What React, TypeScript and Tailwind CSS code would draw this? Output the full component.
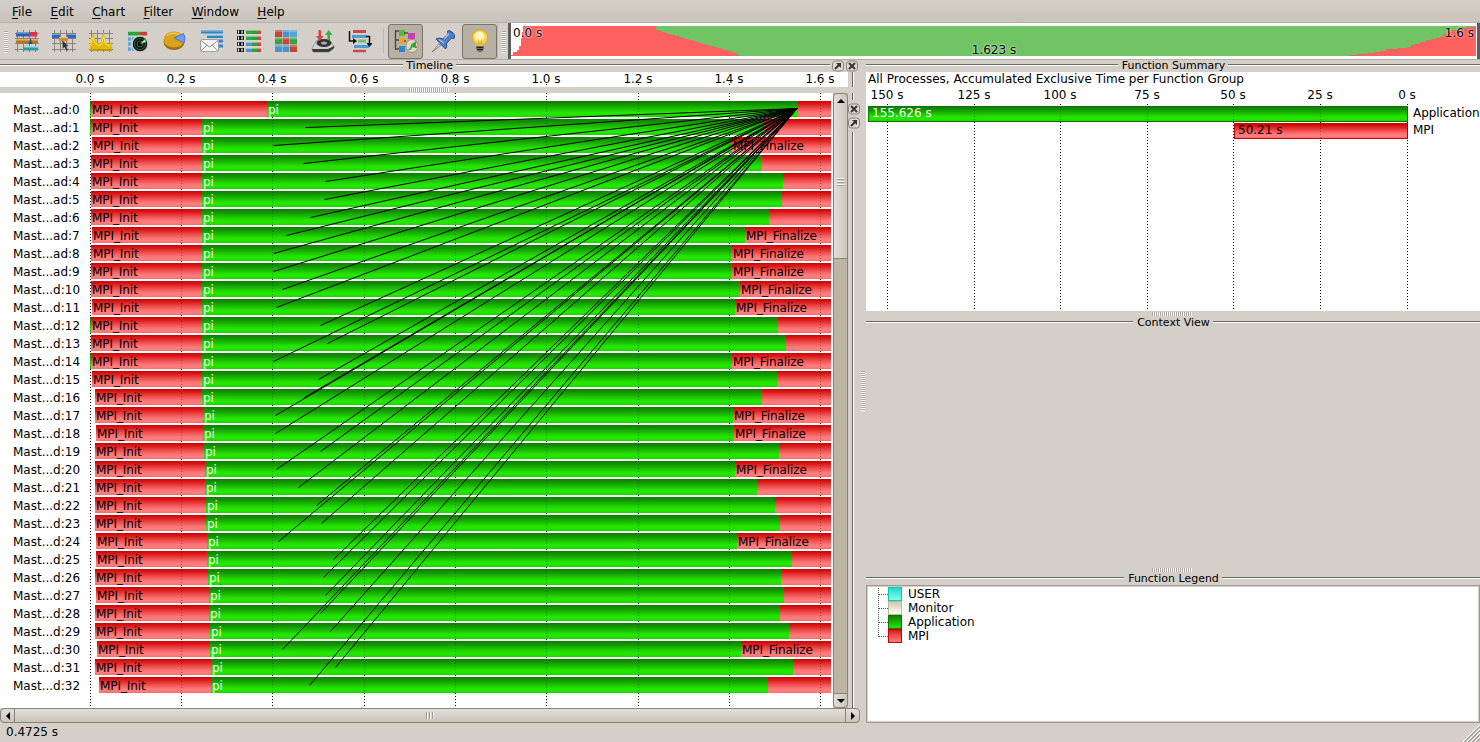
import React from 'react';

type Row = { init: number; pi: number; fin: number; named?: boolean; msg?: number; lead?: boolean };

// Positions are in chart pixels, measured from the window's left edge.
const ROWS: Row[] = [
  { init: 91, pi: 267, fin: 798, lead: true },
  { init: 91, pi: 202, fin: 764, msg: 305, lead: true },
  { init: 92, pi: 202, fin: 732, named: true, msg: 273 },
  { init: 91, pi: 202, fin: 762, msg: 303 },
  { init: 91, pi: 202, fin: 783, msg: 325 },
  { init: 91, pi: 202, fin: 782, msg: 324 },
  { init: 91, pi: 202, fin: 769, msg: 310 },
  { init: 92, pi: 202, fin: 745, named: true, msg: 286 },
  { init: 92, pi: 202, fin: 732, named: true, msg: 273, lead: true },
  { init: 91, pi: 202, fin: 732, named: true, msg: 273 },
  { init: 91, pi: 202, fin: 740, named: true, msg: 282 },
  { init: 92, pi: 202, fin: 735, named: true, msg: 276 },
  { init: 91, pi: 202, fin: 778, msg: 320, lead: true },
  { init: 91, pi: 202, fin: 786, msg: 327 },
  { init: 91, pi: 202, fin: 732, named: true, msg: 273, lead: true },
  { init: 92, pi: 202, fin: 777, msg: 318 },
  { init: 95, pi: 202, fin: 762, msg: 304 },
  { init: 95, pi: 203, fin: 733, named: true, msg: 275 },
  { init: 96, pi: 203, fin: 734, named: true, msg: 275 },
  { init: 95, pi: 204, fin: 779, msg: 320 },
  { init: 95, pi: 205, fin: 735, named: true, msg: 276 },
  { init: 95, pi: 205, fin: 757, msg: 298 },
  { init: 95, pi: 206, fin: 775, msg: 316 },
  { init: 95, pi: 206, fin: 780, msg: 321 },
  { init: 96, pi: 207, fin: 737, named: true, msg: 278 },
  { init: 96, pi: 207, fin: 792, msg: 333 },
  { init: 95, pi: 208, fin: 781, msg: 323 },
  { init: 96, pi: 209, fin: 784, msg: 325 },
  { init: 95, pi: 209, fin: 780, msg: 320 },
  { init: 95, pi: 210, fin: 789, msg: 330 },
  { init: 97, pi: 210, fin: 741, named: true, msg: 282 },
  { init: 95, pi: 211, fin: 793, msg: 335 },
  { init: 99, pi: 211, fin: 768, msg: 309 },
];

const TICKS = [
  { x: 90, label: '0.0 s' },
  { x: 181, label: '0.2 s' },
  { x: 272, label: '0.4 s' },
  { x: 364, label: '0.6 s' },
  { x: 455, label: '0.8 s' },
  { x: 546, label: '1.0 s' },
  { x: 638, label: '1.2 s' },
  { x: 729, label: '1.4 s' },
  { x: 820, label: '1.6 s' },
];

const SUMMARY_TICKS = [
  { x: 21, label: '150 s' },
  { x: 108, label: '125 s' },
  { x: 194, label: '100 s' },
  { x: 281, label: '75 s' },
  { x: 367, label: '50 s' },
  { x: 454, label: '25 s' },
  { x: 541, label: '0 s' },
];

const GREEN = 'bg-[linear-gradient(180deg,#0f7d00_0%,#129400_20%,#1ec400_50%,#23e600_70%,#23e600_85%,#1fd000_100%)]';
const RED = 'bg-[linear-gradient(180deg,#cf0000_0%,#dc1c1c_20%,#f25252_50%,#fe7b7b_75%,#ff7d7d_88%,#f96a6a_100%)]';
const STRIPES_H = 'bg-[repeating-linear-gradient(90deg,#a9a59d_0px,#a9a59d_1px,#ffffff_1px,#ffffff_2px)]';
const STRIPES_V = 'bg-[repeating-linear-gradient(180deg,#a9a59d_0px,#a9a59d_1px,#ffffff_1px,#ffffff_2px)]';

function Menu() {
  return (
    <nav className="flex h-[23px] shrink-0 items-center border-b border-[#b7b2aa] bg-gradient-to-b from-[#d4cfc8] to-[#c9c3bb] pl-3">
      {['File', 'Edit', 'Chart', 'Filter', 'Window', 'Help'].map((m) => (
        <span key={m} className="mr-[18.4px] pt-[2px] leading-[22px]">
          <span className="underline decoration-1 underline-offset-2">{m[0]}</span>
          {m.slice(1)}
        </span>
      ))}
    </nav>
  );
}

const Svg = ({ children }: { children: React.ReactNode }) => (
  <svg width="24" height="24" viewBox="0 0 24 24" className="block">
    {children}
  </svg>
);

const GridLines = () => (
  <path d="M2.5 1V23M8.5 1V23M14.5 1V23M20.5 1V23M0 4.5H24M0 9.5H24M0 14.5H24M0 20.5H24" stroke="#55524d" strokeWidth="1" opacity=".6" />
);

function IconTimeline() {
  return (
    <Svg>
      <GridLines />
      <rect x="1" y="3" width="14" height="4.500" fill="#2f5fae" />
      <rect x="1" y="3" width="14" height="1.500" fill="#6f9ad8" />
      <rect x="14" y="3" width="8" height="4.500" fill="#e0304a" />
      <rect x="1" y="10" width="22" height="4.500" fill="#b8741c" />
      <rect x="1" y="10" width="22" height="1.500" fill="#e6b066" />
      <path d="M15.500 9l2 6h-4z" fill="#2450a0" />
      <rect x="9" y="17" width="14" height="4.500" fill="#2f9ba5" />
      <rect x="9" y="17" width="14" height="1.500" fill="#8be0e4" />
    </Svg>
  );
}

function IconProcess() {
  return (
    <Svg>
      <GridLines />
      <rect x="0" y="5" width="8" height="4" fill="#2f66b8" />
      <rect x="15" y="5" width="9" height="4" fill="#2f66b8" />
      <path d="M0 5.500H8M15 5.500H24" stroke="#77a4e0" />
      <rect x="7" y="8" width="9" height="4" fill="#d8892c" />
      <path d="M7 8.500H16" stroke="#f0bd7c" />
      <path d="M10 11l6.500 6-2.300.400 2 3.600-1.700 1-2-3.800-1.700 1.600z" fill="#333" stroke="#999" strokeWidth=".5" />
    </Svg>
  );
}

function IconCounter() {
  return (
    <Svg>
      <GridLines />
      <path d="M1 21V15l2-9 1.500-2 1.500 6 3 4 3-1 1-7 1.500-3L16 9l1 5 3 1 1.500-2 1.500 4v4z" fill="#e0b90c" />
      <path d="M1.500 16l2-8 2 5 4 4 3-2 2-8 2 8 5 2" fill="none" stroke="#f7e46c" strokeWidth="1" />
      <path d="M1 21h22" stroke="#c29a00" strokeWidth="2" />
    </Svg>
  );
}

function IconRadar() {
  return (
    <Svg>
      <rect x="2" y="2" width="12" height="4.500" fill="#2aa63a" />
      <rect x="14" y="2" width="7" height="4.500" fill="#cf3a34" />
      <path d="M2 2.500H21" stroke="#8fd59a" />
      <path d="M2 10H10M2 15H8M2 20H10" stroke="#5ba3dc" strokeWidth="3.500" strokeDasharray="3 1" />
      <circle cx="14" cy="15" r="8" fill="#0a0f0c" stroke="#c9ccc9" strokeWidth="1.500" />
      <circle cx="14" cy="15" r="5.500" fill="none" stroke="#396c46" />
      <circle cx="14" cy="15" r="3" fill="none" stroke="#396c46" />
      <path d="M14 15l5-5 1 3z" fill="#a7f0a2" />
    </Svg>
  );
}

function IconPie() {
  return (
    <Svg>
      <ellipse cx="11" cy="13" rx="10.500" ry="8" fill="#9a6c0b" />
      <ellipse cx="11" cy="10.500" rx="10.500" ry="8" fill="#daa31e" />
      <path d="M4 6.500q6-4 12-1" stroke="#f6d878" fill="none" />
      <path d="M11 9l9.500-4.500q3 5 .500 9.500z" fill="#6f9df0" stroke="#3f69c0" strokeWidth=".8" />
    </Svg>
  );
}

function IconMail() {
  return (
    <Svg>
      <path d="M1 3H23M7 7.500H23M12 12H23M19 17H23" stroke="#2e86cc" strokeWidth="3.200" />
      <path d="M1 2H23M7 6.500H23" stroke="#81bde9" strokeWidth="1" />
      <rect x=".5" y="10.500" width="18" height="12" rx="1" fill="#f4f4f2" stroke="#a3a19c" />
      <path d="M1 11.500l8.500 6.500 8.500-6.500M1 22l6-6M18 22l-6-6" fill="none" stroke="#94928d" />
    </Svg>
  );
}

function IconCompare() {
  const ys = [1, 7, 13, 19];
  return (
    <Svg>
      {ys.map((y) => (
        <g key={y}>
          <rect x="0" y={y} width="7" height="4" fill="#111" />
          <path d={`M1.500 ${y + 0.5}v3M5 ${y + 0.5}v3`} stroke="#fff" strokeWidth="1.200" />
          <rect x="9" y={y} width="6" height="4" fill={y > 10 ? '#4c94cf' : '#2ea63f'} />
          <rect x="15" y={y} width="6" height="4" fill="#2f9e3c" />
          <rect x="20" y={y} width="4" height="4" fill="#cb4840" />
          <path d={`M9 ${y + 0.5}H24`} stroke="#fff" opacity=".4" />
        </g>
      ))}
    </Svg>
  );
}

function IconMatrix() {
  const c = ['#c4443a', '#4a94cc', '#5aa2d4', '#36a33e', '#c4443a', '#36a33e', '#4a94cc', '#4a94cc', '#c4443a'];
  return (
    <Svg>
      <rect x="1" y="1" width="22" height="22" fill="#e3e1dd" />
      {c.map((f, i) => (
        <g key={i}>
          <rect x={1 + (i % 3) * 7.5} y={1 + Math.floor(i / 3) * 7.5} width="7" height="7" fill={f} />
          <rect x={1 + (i % 3) * 7.5} y={1 + Math.floor(i / 3) * 7.5} width="7" height="2" fill="#fff" opacity=".25" />
        </g>
      ))}
    </Svg>
  );
}

function IconIO() {
  return (
    <Svg>
      <path d="M1 19l5-8h12l5 6v2l-5 4H2z" fill="#cfcfcf" stroke="#777" strokeWidth=".6" />
      <path d="M1 20h16l6-3v2l-5 4H2z" fill="#3b3b3b" />
      <ellipse cx="13" cy="14" rx="7.500" ry="4" fill="#333" />
      <ellipse cx="13" cy="14" rx="3" ry="1.500" fill="#aaa" />
      <path d="M7.500 1h2.500v6h2.500l-3.700 5-3.800-5h2.500z" fill="#d34338" />
      <path d="M16.500 11h2.500V6h2.500l-3.700-5L14 6h2.500z" fill="#3fae40" />
    </Svg>
  );
}

function IconTree() {
  return (
    <Svg>
      <path d="M5 2.500H18" stroke="#c94a44" strokeWidth="3" />
      <path d="M4 7.500H19" stroke="#4c9ad6" strokeWidth="3" />
      <path d="M10 12H18" stroke="#6fbf72" strokeWidth="3" />
      <path d="M6 17.500H21" stroke="#4c9ad6" strokeWidth="3" />
      <path d="M5 22H18" stroke="#c94a44" strokeWidth="2.500" />
      <path d="M1.500 2v10H6M18 7.500h3.500V15" fill="none" stroke="#111" strokeWidth="1.500" />
      <path d="M5 9l4 3-4 3zM18.500 14h6l-3 4z" fill="#111" />
    </Svg>
  );
}

function IconPalette() {
  return (
    <Svg>
      <path d="M6 2H1.500V20H6M1.500 11H6" fill="none" stroke="#444" strokeWidth="1.300" />
      <rect x="5" y="1" width="6" height="6" fill="#57b83c" />
      <rect x="5" y="9" width="6" height="5.500" fill="#f2a320" />
      <rect x="5" y="17" width="6" height="6" fill="#2f84d4" />
      <path d="M10 4h4M10 12h2" stroke="#222" />
      <ellipse cx="18" cy="17" rx="6" ry="6.500" fill="#e0d9c4" stroke="#8b8573" strokeWidth=".8" />
      <path d="M13.500 21q3-1 4-6l5-3-1 7-3-1-2 3z" fill="#35a43c" />
      <rect x="14" y="4" width="7" height="6" fill="#d53bb0" />
      <circle cx="22" cy="18" r="1" fill="#d44" />
    </Svg>
  );
}

function IconPin() {
  return (
    <Svg>
      <path d="M1 23l7-8 1.500 1.500z" fill="#e8e8e8" stroke="#666" strokeWidth=".8" />
      <path d="M5 10q4-2 6.500 0L17 5 16.500 2q2-1.500 5.500 2t1 5.500l-2.500-.500-5 5.500q1 3-1 5.500z" fill="#4f7fc4" stroke="#234a85" strokeWidth="1" />
      <path d="M8 10.500l5 3.500M13 10l5-5.500" stroke="#a9c7ee" strokeWidth="1.300" />
    </Svg>
  );
}

function IconBulb() {
  return (
    <Svg>
      <circle cx="12" cy="8.500" r="7.800" fill="#f8d04a" stroke="#d89c1f" strokeWidth=".8" />
      <path d="M8 14h8l-1 4H9z" fill="#edba3a" />
      <circle cx="11.500" cy="7.500" r="5" fill="#fff6c4" />
      <path d="M10 10l1 5M14 10l-1 5" stroke="#c98f1f" fill="none" strokeWidth=".7" />
      <path d="M8.500 17h7v4l-2 2h-3l-2-2z" fill="#6d6d6d" />
      <path d="M8.500 18.500h7M9 20.500h6" stroke="#222" />
    </Svg>
  );
}

function Overview() {
  return (
    <div className="relative h-9 min-w-0 flex-1 border-x-[3px] border-[#5c5c5c] bg-white">
      <svg width="965" height="36" className="block" shapeRendering="crispEdges">
        <rect x="12" y="3" width="953" height="30" fill="#70c464" />
        <path
          d="M0 33V32H2V29H6V27H8V23H10V15H11V9H12V3H145V7H148V8H151V9H154V10H157V11H161V12H164V13H168V14H171V15H174V16H178V17H182V18H185V19H188V20H191V21H195V22H199V23H203V24H206V25H210V26H213V27H217V28H220V29H222V30H225V31H227V32H229V33Z"
          fill="#ff6060"
        />
        <path
          d="M838 33V32H847V31H855V30H864V29H869V28H875V26H887V25H896V24H900V22H903V21H909V19H915V17H920V16H925V15H929V14H933V11H937V9H941V7H946V6H952V5H956V4H965V33Z"
          fill="#ff6060"
        />
      </svg>
      <span className="absolute left-[2px] top-[3px] leading-[14px] [text-shadow:0_0_2px_#fff,0_0_2px_#fff]">0.0 s</span>
      <span className="absolute right-[3px] top-[3px] leading-[14px] [text-shadow:0_0_2px_#ffffffb0,0_0_2px_#ffffffb0]">1.6 s</span>
      <span className="absolute inset-x-0 top-[20px] text-center leading-[14px] [text-shadow:0_0_2px_#ffffffb0,0_0_2px_#ffffffb0]">1.623 s</span>
    </div>
  );
}

function Toolbar() {
  const plain = [IconTimeline, IconProcess, IconCounter, IconRadar, IconPie, IconMail, IconCompare, IconMatrix, IconIO, IconTree];
  return (
    <div className="flex h-[37px] shrink-0 border-b border-[#b1ada6]">
      <div className={`ml-1 mt-2 h-[22px] w-1 ${STRIPES_V}`} />
      <div className="flex h-9 items-center">
        {plain.map((I, i) => (
          <button key={i} className="flex w-[37px] justify-center">
            <I />
          </button>
        ))}
        <div className="ml-[5px] mr-[4px] h-6 w-px bg-[#bcb7af]" />
        <button className="flex h-[35px] w-[35px] items-center justify-center rounded-[3px] border border-[#79736a] bg-[#b7b0a4]">
          <IconPalette />
        </button>
        <button className="flex w-[39px] justify-center">
          <IconPin />
        </button>
        <button className="flex h-[35px] w-[35px] items-center justify-center rounded-[3px] border border-[#79736a] bg-[#b7b0a4]">
          <IconBulb />
        </button>
      </div>
      <div className="mr-[2px] h-9 w-px bg-[#bcb7af]" />
      <div className={`ml-[2px] mr-[2px] mt-2 h-[22px] w-1 ${STRIPES_V}`} />
      <Overview />
    </div>
  );
}

const Rule = () => <div className="-mt-[2px] h-[2px] flex-1 border-b border-white bg-[#6b6863]" />;

function DockButton({ kind }: { kind: 'float' | 'close' }) {
  return (
    <svg width="12" height="12" viewBox="0 0 12 12" className="block shrink-0">
      <rect x=".5" y="1" width="11" height="10" rx="3" fill="#dcd7cf" stroke="#8b857b" />
      {kind === 'close' ? (
        <path d="M3 3l6 6M9 3l-6 6" stroke="#333" strokeWidth="1.900" />
      ) : (
        <>
          <path d="M3 9l4.500-4.500" stroke="#333" strokeWidth="2" />
          <path d="M4 3H9V8z" fill="#333" />
        </>
      )}
    </svg>
  );
}

function DockTitle({ title }: { title: string }) {
  return (
    <div className="flex h-3 shrink-0 items-center text-[11px] leading-3">
      <Rule />
      <span className="pl-1 pr-[3px]">{title}</span>
      <Rule />
    </div>
  );
}

function GridOverlay({ height, faint }: { height: number; faint?: boolean }) {
  return (
    <svg width="833" height={height} className={`pointer-events-none absolute left-0 top-0 ${faint ? 'opacity-30' : ''}`} shapeRendering="crispEdges">
      {TICKS.map((t) => (
        <path key={t.x} d={`M${t.x + 0.5} 0V${height}`} stroke="#000" strokeDasharray="1 2" />
      ))}
    </svg>
  );
}

function TimelineChart() {
  return (
    <div className="relative h-full w-[833px] shrink-0 overflow-hidden bg-white pt-2">
      <GridOverlay height={613} />
      <div className="relative flex flex-col gap-[2px]">
        {ROWS.map((r, i) => (
          <div key={i} className="flex h-4 w-[831px] leading-[18px]">
            <span className="w-[79px] shrink-0 whitespace-nowrap pl-[13px]">
              {i < 10 ? `Mast...ad:${i}` : `Mast...d:${i}`}
            </span>
            <div className="flex shrink-0 justify-end" style={{ width: r.init - 79 }}>
              {r.lead && <div className={`h-4 w-px ${GREEN}`} />}
            </div>
            <div className={`shrink-0 overflow-hidden pl-px tracking-[-0.08px] ${RED}`} style={{ width: r.pi - r.init }}>
              MPI_Init
            </div>
            <div className={`shrink-0 pl-px text-[#f4fff0] ${GREEN}`} style={{ width: r.fin - r.pi }}>
              pi
            </div>
            <div className={`min-w-0 flex-1 overflow-hidden pl-px tracking-[-0.08px] ${RED}`}>{r.named ? 'MPI_Finalize' : ''}</div>
          </div>
        ))}
      </div>
      <GridOverlay height={613} faint />
      <svg width="833" height="615" className="pointer-events-none absolute left-0 top-0">
        {ROWS.map((r, i) =>
          r.msg ? <path key={i} d={`M${r.msg + 0.5} ${16.5 + 18 * i}L797 15.5`} stroke="#000" strokeWidth="1" /> : null,
        )}
      </svg>
    </div>
  );
}

function Arrow({ dir }: { dir: 'up' | 'down' | 'left' | 'right' }) {
  const d = {
    up: 'M0 6L4 2L8 6z',
    down: 'M0 2L4 6L8 2z',
    left: 'M6 0L2 4L6 8z',
    right: 'M2 0L6 4L2 8z',
  }[dir];
  return (
    <svg width="8" height="8" viewBox="0 0 8 8">
      <path d={d} fill="#000" />
    </svg>
  );
}

function VScroll() {
  const face = 'border border-[#8b8374] bg-gradient-to-r from-[#e3ded9] to-[#cac5bb]';
  return (
    <div className="flex h-full w-[15px] shrink-0 flex-col bg-[#bdb5a3]">
      <div className={`flex h-[15px] shrink-0 items-center justify-center rounded-t-sm ${face}`}>
        <Arrow dir="up" />
      </div>
      <div className="-mt-px flex h-[152px] shrink-0 items-center justify-center border-x border-b border-[#8b8374] bg-gradient-to-r from-[#e3ded9] to-[#cac5bb]">
        <div className="h-[9px] w-[7px] bg-[repeating-linear-gradient(180deg,#fff_0px,#fff_1px,#9b958a_1px,#9b958a_2px,transparent_2px,transparent_3px)]" />
      </div>
      <div className="flex-1 border-x border-[#8b8374]" />
      <div className={`flex h-[15px] shrink-0 items-center justify-center rounded-b-sm ${face}`}>
        <Arrow dir="down" />
      </div>
    </div>
  );
}

function HScroll() {
  return (
    <div className="flex h-[15px] w-[860px] shrink-0 rounded-sm border border-[#8b8374] bg-gradient-to-b from-[#e3ded9] to-[#cac5bb]">
      <div className="flex w-[14px] items-center justify-center border-r border-[#8b8374]">
        <Arrow dir="left" />
      </div>
      <div className="flex flex-1 items-center justify-center">
        <div className="h-[7px] w-[9px] bg-[repeating-linear-gradient(90deg,#9b958a_0px,#9b958a_1px,#fff_1px,#fff_2px,transparent_2px,transparent_3px)]" />
      </div>
      <div className="flex w-[14px] items-center justify-center border-l border-[#8b8374]">
        <Arrow dir="right" />
      </div>
    </div>
  );
}

const SideRule = ({ className = '' }: { className?: string }) => (
  <div className={`w-[2px] border-r border-white bg-[#6b6863] ${className}`} />
);

function TimelineDock() {
  return (
    <section className="flex w-[860px] shrink-0 flex-col">
      <div className="flex h-3 shrink-0 items-center text-[11px] leading-3">
        <Rule />
        <span className="px-[3px]">Timeline</span>
        <div className="-mt-[2px] h-[2px] w-[374px] border-b border-white bg-[#6b6863]" />
        <div className="ml-[2px] mr-[2px] flex gap-[2px]">
          <DockButton kind="float" />
          <DockButton kind="close" />
        </div>
      </div>
      <div className="flex h-[15px] shrink-0">
        <div className="relative h-[15px] w-[848px] bg-white">
          {TICKS.map((t) => (
            <span key={t.x} className="absolute top-0 w-[60px] -translate-x-1/2 text-center leading-[15px]" style={{ left: t.x }}>
              {t.label}
            </span>
          ))}
          <TickMarks />
        </div>
        <SideRule className="ml-1 h-[15px]" />
      </div>
      <div className="flex h-[6px] shrink-0 justify-center pr-[2px]">
        <div className={`mt-px h-1 w-10 ${STRIPES_H}`} />
      </div>
      <div className="flex h-[615px] shrink-0">
        <TimelineChart />
        <VScroll />
        <div className="flex w-3 flex-col items-center">
          <SideRule className="mr-[2px] h-[7px]" />
          <div className="flex flex-col gap-[2px] py-[3px]">
            <DockButton kind="close" />
            <DockButton kind="float" />
          </div>
          <SideRule className="mr-[2px] min-h-0 flex-1" />
        </div>
      </div>
      <HScroll />
    </section>
  );
}

function TickMarks() {
  return (
    <svg width="848" height="15" className="absolute left-0 top-0" shapeRendering="crispEdges">
      {TICKS.map((t) => (
        <path key={t.x} d={`M${t.x} 12.500h1`} stroke="#000" />
      ))}
    </svg>
  );
}

function SummaryGrid({ faint }: { faint?: boolean }) {
  return (
    <svg width="614" height="207" className={`absolute left-0 top-0 ${faint ? 'opacity-30' : ''}`} shapeRendering="crispEdges">
      {SUMMARY_TICKS.map((t) => (
        <path key={t.x} d={`M${t.x + 0.5} 0V207`} stroke="#000" strokeDasharray="1 2" />
      ))}
    </svg>
  );
}

function FunctionSummary() {
  return (
    <div className="flex h-[239px] shrink-0 flex-col bg-white">
      <div className="h-[15px] whitespace-nowrap pl-[2px] leading-[15px]">All Processes, Accumulated Exclusive Time per Function Group</div>
      <div className="relative h-[17px]">
        {SUMMARY_TICKS.map((t) => (
          <span key={t.x} className="absolute top-0 w-[60px] -translate-x-1/2 text-center leading-[16px]" style={{ left: t.x }}>
            {t.label}
          </span>
        ))}
      </div>
      <div className="relative flex-1">
        <SummaryGrid />
        <div className="relative flex flex-col gap-px pl-[2px] pt-[2px]">
          <div className="flex h-4">
            <div className={`h-4 w-[540px] border border-[#0d7800] pl-[3px] leading-[13px] text-[#f4fff0] ${GREEN}`}>155.626 s</div>
            <span className="whitespace-nowrap pl-[5px] leading-[14px] tracking-[-0.05px]">Application</span>
          </div>
          <div className="flex h-4 pl-[366px]">
            <div className={`h-4 w-[174px] border border-[#cc0000] pl-[3px] leading-[13px] ${RED}`}>50.21 s</div>
            <span className="pl-[5px] leading-[14px]">MPI</span>
          </div>
        </div>
        <SummaryGrid faint />
      </div>
    </div>
  );
}

const LEGEND = [
  { name: 'USER', box: 'border-[#00c9b4] bg-gradient-to-b from-[#1fd6c4] to-[#78fff2]' },
  { name: 'Monitor', box: 'border-[#c9b894] bg-gradient-to-b from-[#d3c7ae] to-[#ffffff]' },
  { name: 'Application', box: 'border-[#0d7800] bg-gradient-to-b from-[#108400] to-[#23e600]' },
  { name: 'MPI', box: 'border-[#cc0000] bg-gradient-to-b from-[#d40c0c] to-[#ff7d7d]' },
];

function FunctionLegend() {
  return (
    <div className="flex h-[138px] shrink-0 border border-[#a09a8c] bg-white">
      <div className="flex flex-1 border border-[#d4cfc8]">
        <svg width="20" height="56" className="block shrink-0" shapeRendering="crispEdges">
          <path d="M10.500 1V51" stroke="#555" strokeDasharray="1 1" />
          {[7, 21, 35, 49].map((y) => (
            <path key={y} d={`M11 ${y + 0.5}H20`} stroke="#555" strokeDasharray="1 1" />
          ))}
        </svg>
        <div className="flex flex-col">
          {LEGEND.map((l) => (
            <div key={l.name} className="flex h-[14px] leading-[15px]">
              <div className={`h-[14px] w-[14px] border ${l.box}`} />
              <span className="pl-[6px] tracking-[-0.05px]">{l.name}</span>
            </div>
          ))}
        </div>
      </div>
    </div>
  );
}

const Handle = () => (
  <div className="flex h-[6px] shrink-0 justify-center pr-[2px] pt-px">
    <div className={`h-1 w-10 ${STRIPES_H}`} />
  </div>
);

export default function App() {
  return (
    <div className="flex h-[742px] w-[1480px] flex-col overflow-hidden bg-[#d4cfc8] text-[12px] text-[#000] [font-family:'DejaVu_Sans',sans-serif]">
      <Menu />
      <Toolbar />
      <main className="flex h-[663px] shrink-0">
        <TimelineDock />
        <div className="flex w-[6px] items-start pl-px">
          <div className={`mt-[311px] h-10 w-1 ${STRIPES_V}`} />
        </div>
        <aside className="flex w-[614px] flex-col">
          <DockTitle title="Function Summary" />
          <FunctionSummary />
          <Handle />
          <DockTitle title="Context View" />
          <div className="h-[238px] shrink-0" />
          <Handle />
          <DockTitle title="Function Legend" />
          <FunctionLegend />
        </aside>
      </main>
      <footer className="flex min-h-0 flex-1 items-start justify-between pl-[6px]">
        <span className="leading-[18px]">0.4725 s</span>
        <svg width="17" height="17" className="self-end">
          <path d="M0 17L17 0M4 17L17 4M8 17L17 8M12 17L17 12" stroke="#fff" strokeWidth="1.200" />
          <path d="M1.500 17L17 1.500M5.500 17L17 5.500M9.500 17L17 9.500M13.500 17L17 13.500" stroke="#9b978f" strokeWidth="1.200" />
        </svg>
      </footer>
    </div>
  );
}
